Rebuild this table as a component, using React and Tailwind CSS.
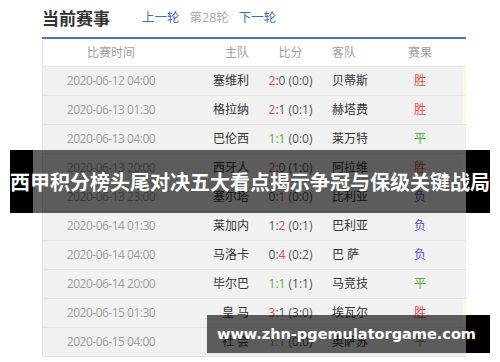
import React from "react";

const matches = [
  { time: "2020-06-12 04:00", home: "塞维利", h: "2", a: "0", half: "(0:0)", away: "贝蒂斯", res: "胜" },
  { time: "2020-06-13 01:30", home: "格拉纳", h: "2", a: "1", half: "(0:1)", away: "赫塔费", res: "胜" },
  { time: "2020-06-13 04:00", home: "巴伦西", h: "1", a: "1", half: "(0:0)", away: "莱万特", res: "平" },
  { time: "2020-06-13 20:00", home: "西牙人", h: "2", a: "0", half: "(1:0)", away: "阿拉维", res: "胜" },
  { time: "2020-06-13 23:00", home: "塞尔塔", h: "0", a: "1", half: "(0:0)", away: "比利亚", res: "负" },
  { time: "2020-06-14 01:30", home: "莱加内", h: "1", a: "2", half: "(0:1)", away: "巴利亚", res: "负" },
  { time: "2020-06-14 04:00", home: "马洛卡", h: "0", a: "4", half: "(0:2)", away: "巴 萨", res: "负" },
  { time: "2020-06-14 20:00", home: "毕尔巴", h: "1", a: "1", half: "(1:1)", away: "马竞技", res: "平" },
  { time: "2020-06-15 01:30", home: "皇 马", h: "3", a: "1", half: "(3:0)", away: "埃瓦尔", res: "胜" },
  { time: "2020-06-15 04:00", home: "社 会", h: "1", a: "1", half: "(0:0)", away: "奥萨苏", res: "平" },
];

const cols = "grid grid-cols-[136px_70px_83px_64px_48px_1fr]";

const Score = ({ h, a, half }) => {
  if (h === a) {
    return (
      <span>
        <span className="text-[#5aa845]">{h}:{a}</span> {half}
      </span>
    );
  }
  const homeWin = Number(h) > Number(a);
  return (
    <span>
      <span className={homeWin ? "text-[#e0483e]" : ""}>{h}</span>:
      <span className={homeWin ? "" : "text-[#e0483e]"}>{a}</span> {half}
    </span>
  );
};

const resultColor = {
  胜: "text-[#e04a42]",
  平: "text-[#5aa845]",
  负: "text-[#4a55b8]",
};

export default function App() {
  return (
    <div
      className="relative w-[500px] h-[362px] overflow-hidden bg-white"
      style={{ fontFamily: '"Open Sans", "Noto Sans CJK SC", sans-serif' }}
    >
      <div className="ml-[42px] w-[424px]">
        {/* HEADER */}
        <div className="h-[37px] flex items-center">
          <h1 className="text-[17px] font-bold text-[#333] leading-none">当前赛事</h1>
          <div className="ml-[32px] flex items-center gap-[10px] text-[12.5px] leading-none">
            <span className="text-[#3a70b5]">上一轮</span>
            <span className="text-[#aaa]">第28轮</span>
            <span className="text-[#3a70b5]">下一轮</span>
          </div>
        </div>
        <div className="h-[2px] bg-[#4a78b0]" />

        {/* TABLE */}
        <div className="border-l border-[#e3e3e3]">
          <div className={`${cols} h-[28px] items-center bg-white border-b border-[#e3e3e3] text-[12px] text-[#a0a0a0]`}>
            <span className="text-center">比赛时间</span>
            <span className="text-right">主队</span>
            <span className="text-center">比分</span>
            <span className="text-left">客队</span>
            <span className="text-center">赛果</span>
            <span />
          </div>
          {matches.map((m) => (
            <div
              key={m.time}
              className={`${cols} h-[29px] items-center bg-[#f1f1f1] border-b border-[#e2e2e2] text-[12px]`}
            >
              <span className="text-center text-[#9c9c9c] tracking-[-0.5px]">{m.time}</span>
              <span className="text-right text-[#333]">{m.home}</span>
              <span className="text-center text-[#555]">
                <Score h={m.h} a={m.a} half={m.half} />
              </span>
              <span className="text-left text-[#333]">{m.away}</span>
              <span className={`text-center ${resultColor[m.res]}`}>{m.res}</span>
              <span className="flex justify-end h-full">
                {m.res === "胜" && <span className="w-[3px] h-full bg-[#fdf9dc]" />}
              </span>
            </div>
          ))}
        </div>
      </div>

      {/* TITLE BAND */}
      <div className="absolute top-[150px] left-[10px] w-[480px] h-[63px] flex">
        <div className="w-[23px] bg-black" />
        <div className="flex-1 bg-black/[0.62]" />
        <div className="w-[24px] bg-black" />
        <div className="absolute inset-0 flex items-center justify-center">
          <span
            className="text-white text-[20px] font-bold leading-none whitespace-nowrap"
            style={{ fontFamily: '"Noto Sans CJK SC", sans-serif' }}
          >
            西甲积分榜头尾对决五大看点揭示争冠与保级关键战局
          </span>
        </div>
      </div>

      {/* URL BAND */}
      <div className="absolute top-[315px] left-[207px] w-[283px] h-[38px] flex">
        <div className="flex-1 bg-black/[0.62]" />
        <div className="w-[24px] bg-black" />
        <div className="absolute inset-0 flex items-center pl-[10px]">
          <span
            className="text-white text-[14.5px] font-bold leading-none whitespace-nowrap"
            style={{ fontFamily: '"DejaVu Sans", sans-serif' }}
          >
            www.zhn-pgemulatorgame.com
          </span>
        </div>
      </div>
    </div>
  );
}
